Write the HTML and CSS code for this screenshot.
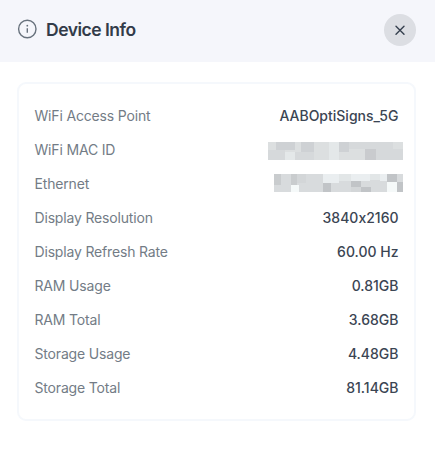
FILE: index.html
```
<!DOCTYPE html>
<html lang="en">
<head>
<meta charset="utf-8">
<title>Device Info</title>
<link rel="stylesheet" href="styles.css">
</head>
<body>
<header class="header">
  <svg class="info" width="20" height="20" viewBox="0 0 20 20" fill="none" stroke="#68727d"><circle cx="10.3" cy="10" r="8.7" stroke-width="1.4"/><path d="M10.3 9.2v4.5" stroke-width="1.4"/><circle cx="10.3" cy="6.7" r=".9" fill="#68727d" stroke="none"/></svg>
  <h1 class="title">Device Info</h1>
  <button class="close" aria-label="Close"><svg width="12" height="12" viewBox="0 0 12 12" fill="none" stroke="#353f4e" stroke-width="1.4" stroke-linecap="round"><path d="M2 2.3l8 8M10 2.3l-8 8"/></svg></button>
</header>
<main class="card">
  <dl class="list">
    <div class="row"><dt>WiFi Access Point</dt><dd>AABOptiSigns_5G</dd></div>
    <div class="row"><dt>WiFi MAC ID</dt><dd class="masked">
      <svg class="lowered" width="135" height="18" viewBox="24 21 405 54" preserveAspectRatio="none" shape-rendering="crispEdges">
        <path fill="#dcdfe0" d="M24 21h405v54H24z"/>
        <path fill="#ced1d4" d="M47 21h58v24H47zM123 21h39v30h-39zM236 21h32v29h-32z"/>
        <path fill="#d6d9db" d="M24 45h50v30H24zM105 51h57v24h-57zM268 21h48v22h-48zM316 21h82v22h-82zM347 43h82v32h-82z"/>
        <path fill="#e4e8e9" d="M208 21h28v54h-28zM74 51h31v24H74z"/>
        <path fill="#c9cbce" d="M316 43h31v32h-31z"/>
      </svg></dd></div>
    <div class="row"><dt>Ethernet</dt><dd class="masked">
      <svg class="raised" width="129" height="18" viewBox="43 117 386 54" preserveAspectRatio="none" shape-rendering="crispEdges">
        <path fill="#d8dbdd" d="M43 117h386v54H43z"/>
        <path fill="#c9ccce" d="M43 117h20v33H43zM93 117h19v33H93z"/>
        <path fill="#d3d6d8" d="M112 117h28v27h-28zM273 156h30v15h-30z"/>
        <path fill="#eaeef0" d="M189 117h48v26h-48zM273 117h57v20h-57zM360 117h21v22h-21z"/>
        <path fill="#e2e6e7" d="M237 117h36v21h-36zM330 117h30v17h-30z"/>
        <path fill="#f5f9f9" d="M93 150h24v21H93zM381 141h30v30h-30z"/>
        <path fill="#c1c4c7" d="M189 144h24v27h-24zM273 138h30v18h-30zM303 156h30v15h-30zM381 117h30v24h-30zM411 141h18v30h-18z"/>
      </svg></dd></div>
    <div class="row"><dt>Display Resolution</dt><dd>3840x2160</dd></div>
    <div class="row"><dt>Display Refresh Rate</dt><dd>60.00 Hz</dd></div>
    <div class="row"><dt>RAM Usage</dt><dd>0.81GB</dd></div>
    <div class="row"><dt>RAM Total</dt><dd>3.68GB</dd></div>
    <div class="row"><dt>Storage Usage</dt><dd>4.48GB</dd></div>
    <div class="row"><dt>Storage Total</dt><dd>81.14GB</dd></div>
  </dl>
</main>
</body>
</html>
```
FILE: styles.css
```
* { box-sizing: border-box; }
body { margin: 0; background: #fff; font-family: Inter, sans-serif; font-feature-settings: "calt" 0; }
.header { display: flex; align-items: center; height: 62px; padding: 0 19px 2px 17px; background: #f5f6fb; }
.info { margin-top: -3px; }
.title { margin: 0 auto 0 9px; font-size: 17.5px; line-height: 24px; font-weight: 600; letter-spacing: -0.5px; color: #323b49; }
.close { display: grid; place-items: center; width: 32px; height: 32px; padding: 0; border: 0; border-radius: 50%; background: #dcdee3; }
.card { margin: 20px 19px 0 17px; height: 339px; padding: 15px; border: 2px solid #f5f8fc; border-radius: 9px; }
.list { margin: 0; }
.row { display: flex; justify-content: space-between; align-items: center; height: 34px; font-size: 14px; line-height: 20px; }
.row dt { padding-left: 0.5px; letter-spacing: -0.17px; color: #737c86; }
.row dd { margin: 0 0.5px 0 0; font-weight: 500; color: #3b4553; }
.masked svg { display: block; }
.masked .raised { margin-top: -2px; }
.masked .lowered { margin-top: 2px; }
.row .masked { margin-right: -4px; }
```
